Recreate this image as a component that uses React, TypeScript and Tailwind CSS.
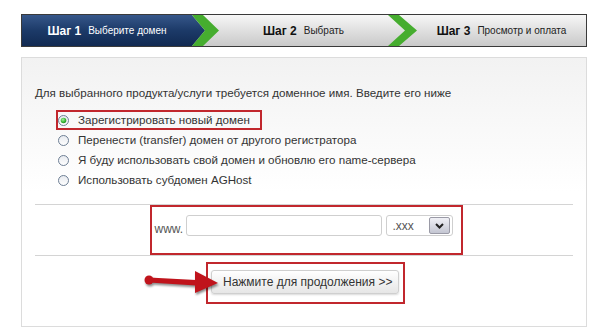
import React from "react";

const Radio = ({ checked }: { checked?: boolean }) => (
  <svg width="11" height="11" viewBox="0 0 11 11" className="shrink-0">
    <defs>
      <linearGradient id={checked ? "rgc" : "rg"} x1="0" y1="0" x2="0" y2="1">
        <stop offset="0" stopColor="#e6e9ee" />
        <stop offset="1" stopColor="#ffffff" />
      </linearGradient>
      <radialGradient id="gdot" cx="0.4" cy="0.35" r="0.7">
        <stop offset="0" stopColor="#a6ef9e" />
        <stop offset="0.6" stopColor="#3dbb3a" />
        <stop offset="1" stopColor="#1e8a22" />
      </radialGradient>
    </defs>
    <circle cx="5.5" cy="5.5" r="5" fill={`url(#${checked ? "rgc" : "rg"})`} stroke="#6e7f94" strokeWidth="1" />
    {checked && <circle cx="5.5" cy="5.5" r="2.8" fill="url(#gdot)" />}
  </svg>
);

export default function App() {
  const font = { fontFamily: '"Liberation Sans", Arial, sans-serif' };
  const options = [
    "Зарегистрировать новый домен",
    "Перенести (transfer) домен от другого регистратора",
    "Я буду использовать свой домен и обновлю его name-сервера",
    "Использовать субдомен AGHost",
  ];
  return (
    <div className="w-[600px] h-[333px] bg-white pt-[14px] pl-[21px] overflow-hidden" style={font}>
      {/* Steps header */}
      <div className="flex w-[566px] h-[33px] border border-[#3a3a3a]">
        <div className="w-[170px] h-full flex items-center justify-center gap-[7px] bg-linear-to-b from-[#36578a] via-[#1c3a68] to-[#112a52]">
          <span className="text-[12px] font-bold text-white">Шаг 1</span>
          <span className="text-[10px] text-white">Выберите домен</span>
        </div>
        <svg width="27" height="31" viewBox="0 0 27 31" className="shrink-0 block bg-linear-to-b from-[#f7f7f7] to-[#c9c9c9]">
          <defs>
            <linearGradient id="bl" x1="0" y1="0" x2="0" y2="1">
              <stop offset="0" stopColor="#36578a" />
              <stop offset="0.5" stopColor="#1c3a68" />
              <stop offset="1" stopColor="#112a52" />
            </linearGradient>
          </defs>
          <polygon points="0,0 13,15.5 0,31" fill="url(#bl)" />
          <polygon points="0,0 11,0 27,15.5 11,31 0,31 13,15.5" fill="#46ad2f" />
        </svg>
        <div className="w-[169px] h-full flex items-center justify-center gap-[7px] bg-linear-to-b from-[#f7f7f7] to-[#c9c9c9]">
          <span className="text-[12px] font-bold text-[#111]">Шаг 2</span>
          <span className="text-[10px] text-[#222]">Выбрать</span>
        </div>
        <svg width="29" height="31" viewBox="0 0 29 31" className="shrink-0 block bg-linear-to-b from-[#f7f7f7] to-[#c9c9c9]">
          <polygon points="0,0 11,0 29,15.5 11,31 0,31 17,15.5" fill="#46ad2f" />
        </svg>
        <div className="flex-1 h-full flex items-center justify-center gap-[7px] bg-linear-to-b from-[#f7f7f7] to-[#c9c9c9]">
          <span className="text-[12px] font-bold text-[#111]">Шаг 3</span>
          <span className="text-[10px] text-[#222]">Просмотр и оплата</span>
        </div>
      </div>

      {/* Panel */}
      <div className="mt-[10px] w-[566px] h-[270px] border border-[#dcdcdc] bg-linear-to-b from-[#f2f2f2] via-white to-white px-[13px] pt-[28px]">
        <div className="text-[11.6px] leading-[14px] text-[#333]">
          Для выбранного продукта/услуги требуется доменное имя. Введите его ниже
        </div>
        <div className="mt-[10px] ml-[21px] flex flex-col">
          {options.map((o, i) => (
            <div
              key={o}
              className={`w-fit h-[20px] flex items-center gap-[9px] border-2 pr-[10px] text-[11.6px] text-[#333] whitespace-nowrap ${
                i === 0 ? "border-[#c1272d]" : "border-transparent"
              }`}
            >
              <Radio checked={i === 0} />
              <span>{o}</span>
            </div>
          ))}
        </div>

        <div className="mt-[14px] border-t border-[#d4d4d4] flex justify-center">
          <div className="h-[50px] border-2 border-[#c1272d] flex items-start pt-[8px] pl-[3px] pr-[8px] gap-[4px] ml-[4px]">
            <span className="text-[12px] text-[#555] pt-[5px] w-[27px]">www.</span>
            <div className="w-[196px] h-[21px] rounded-[3px] border border-[#cfcfcf] bg-white"></div>
            <div className="w-[67px] h-[21px] rounded-[3px] border border-[#cfcfcf] bg-white flex items-center pl-[6px] pr-[2px]">
              <span className="text-[12px] text-[#555]">.xxx</span>
              <div className="ml-auto w-[21px] h-[17px] rounded-[2px] border border-[#9a9aa6] bg-linear-to-b from-[#f0f0f6] to-[#c4c6d2] flex items-center justify-center">
                <svg width="9" height="6" viewBox="0 0 9 6">
                  <path d="M1 1 L4.5 4.5 L8 1" fill="none" stroke="#222" strokeWidth="2" />
                </svg>
              </div>
            </div>
          </div>
        </div>

        <div className="border-t border-[#d4d4d4] pt-[6px] flex justify-center">
          <div className="relative ml-[3px] w-[199px] h-[42px] border-2 border-[#c1272d] pl-[3px] pt-[6px]">
            <svg
              width="78"
              height="32"
              viewBox="0 0 78 32"
              className="absolute left-[-64px] top-[3px] drop-shadow-[1px_2px_1px_rgba(0,0,0,0.45)]"
            >
              <circle cx="5" cy="13" r="4.5" fill="#c0141c" />
              <polygon points="5,10.5 52,13 52,18.5 5,15.5" fill="#c0141c" />
              <polygon points="51,4 74,16 51,26" fill="#c0141c" />
            </svg>
            <div className="w-[188px] h-[24px] rounded-[3px] border border-[#cfcfcf] bg-linear-to-b from-white to-[#e6e6e6] shadow-[0_1px_2px_rgba(0,0,0,0.15)] flex items-center pl-[11px] text-[12px] text-[#333] whitespace-nowrap">
              Нажмите для продолжения &gt;&gt;
            </div>
          </div>
        </div>
      </div>
    </div>
  );
}
